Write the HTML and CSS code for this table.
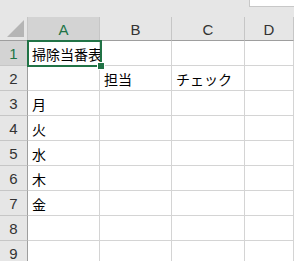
FILE: index.html
```html
<!DOCTYPE html>
<html lang="ja">
<head>
<meta charset="utf-8">
<link rel="stylesheet" href="styles.css">
</head>
<body>
<div class="topbar"><div class="spacer"></div><div class="namebox"></div></div>
<div class="sheet">
  <div class="grid">
    <div class="corner"><div class="tri"></div></div>
    <div class="colhead sel">A</div>
    <div class="colhead">B</div>
    <div class="colhead">C</div>
    <div class="colhead">D</div>

    <div class="rowhead sel">1</div>
    <div class="cell text">掃除当番表</div><div class="cell"></div><div class="cell"></div><div class="cell"></div>

    <div class="rowhead">2</div>
    <div class="cell"></div><div class="cell text">担当</div><div class="cell text">チェック</div><div class="cell"></div>

    <div class="rowhead">3</div>
    <div class="cell text">月</div><div class="cell"></div><div class="cell"></div><div class="cell"></div>

    <div class="rowhead">4</div>
    <div class="cell text">火</div><div class="cell"></div><div class="cell"></div><div class="cell"></div>

    <div class="rowhead">5</div>
    <div class="cell text">水</div><div class="cell"></div><div class="cell"></div><div class="cell"></div>

    <div class="rowhead">6</div>
    <div class="cell text">木</div><div class="cell"></div><div class="cell"></div><div class="cell"></div>

    <div class="rowhead">7</div>
    <div class="cell text">金</div><div class="cell"></div><div class="cell"></div><div class="cell"></div>

    <div class="rowhead">8</div>
    <div class="cell"></div><div class="cell"></div><div class="cell"></div><div class="cell"></div>

    <div class="rowhead">9</div>
    <div class="cell"></div><div class="cell"></div><div class="cell"></div><div class="cell"></div>
  </div>
  <div class="selection"><div class="handle"></div></div>
</div>
</body>
</html>
```

FILE: styles.css
```css
html, body {
  margin: 0;
  padding: 0;
  background: #ffffff;
  overflow: hidden;
}
body {
  width: 294px;
  height: 261px;
  font-family: "Noto Sans CJK JP", "Noto Sans", sans-serif;
}
.topbar {
  display: flex;
  height: 17px;
  background: #e6e6e6;
}
.spacer { flex: 1; }
.namebox {
  width: 44px;
  height: 6px;
  background: #ffffff;
  border-left: 1px solid #c8c8c8;
  border-bottom: 1px solid #c8c8c8;
}
.sheet {
  position: relative;
}
.grid {
  display: grid;
  grid-template-columns: 28px 72px 72px 73px 1fr;
  grid-template-rows: 24px repeat(9, 25px);
}
.corner {
  background: #e6e6e6;
  border-right: 1px solid #c6c6c6;
  border-bottom: 1px solid #9e9e9e;
  box-sizing: border-box;
  position: relative;
}
.tri {
  position: absolute;
  right: 3px;
  bottom: 3px;
  width: 0;
  height: 0;
  border-left: 17px solid transparent;
  border-bottom: 17px solid #b5b5b5;
}
.colhead {
  background: #e6e6e6;
  border-right: 1px solid #c6c6c6;
  border-bottom: 1px solid #9e9e9e;
  box-sizing: border-box;
  display: flex;
  align-items: center;
  justify-content: center;
  font-family: "Liberation Sans", Arial, sans-serif;
  font-size: 15px;
  color: #333333;
  padding-top: 1px;
}
.rowhead {
  background: #e6e6e6;
  border-right: 1px solid #9e9e9e;
  border-bottom: 1px solid #c6c6c6;
  box-sizing: border-box;
  display: flex;
  align-items: center;
  justify-content: center;
  font-family: "Liberation Sans", Arial, sans-serif;
  font-size: 15px;
  color: #333333;
  padding-top: 1px;
}
.colhead.sel, .rowhead.sel {
  background: #d3d3d3;
  color: #217346;
}
.cell {
  border-right: 1px solid #d4d4d4;
  border-bottom: 1px solid #d4d4d4;
  box-sizing: border-box;
  font-size: 14px;
  color: #000000;
  white-space: nowrap;
  overflow: visible;
  padding-left: 4px;
  display: flex;
  align-items: center;
  padding-top: 1px;
}
.selection {
  position: absolute;
  left: 27px;
  top: 23px;
  width: 75px;
  height: 27px;
  border: 2px solid #217346;
  box-sizing: border-box;
  pointer-events: none;
}
.handle {
  position: absolute;
  right: -5px;
  bottom: -5px;
  width: 6px;
  height: 6px;
  background: #217346;
  border: 1px solid #ffffff;
}
```
